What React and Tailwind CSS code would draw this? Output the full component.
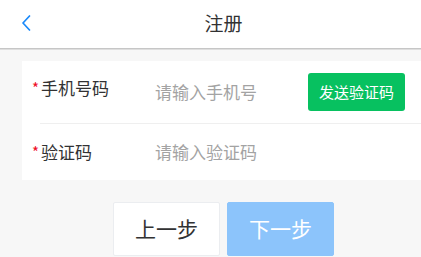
import React, {useState} from 'react'

const font = {fontFamily: '"Noto Sans CJK SC", "Noto Sans", sans-serif'}

const Field = ({label, placeholder, value, onChange, children, top}) => {
  return (
    <div className={`flex items-center pl-[10px] pr-[20px] ${top ? 'py-[12px]' : 'py-[16px]'}`}>
      <div className={`flex w-[123px] shrink-0 leading-[24px] ${top ? 'self-start mt-[3px]' : ''}`}>
        <span className="w-[9px] text-[15px] text-[#ee0a24]">*</span>
        <span className="text-[17px] text-[#323233]">{label}</span>
      </div>
      <input
        className="flex-1 min-w-0 text-[17px] leading-[24px] text-[#323233] bg-transparent outline-none placeholder:text-[#a3a3a3]"
        style={font}
        placeholder={placeholder}
        value={value}
        onChange={onChange}
      />
      {children}
    </div>
  )
}

const App = () => {
  const [phone, setPhone] = useState('')
  const [code, setCode] = useState('')

  return (
    <div className="w-full min-h-screen overflow-hidden bg-[#f7f7f7]" style={font}>
      <div className="w-[447px]">
        <div className="h-[49px] bg-white grid grid-cols-[1fr_auto_1fr] items-center border-b border-[#c6c6c6] shadow-[0_1px_0_#dedede]">
          <div className="pl-[21px] pb-[3px]">
            <svg width="10" height="16" viewBox="0 0 10 16" className="block">
              <polyline points="8.5,1 2,8 8.5,15" fill="none" stroke="#1989fa" strokeWidth="1.7" strokeLinecap="round" strokeLinejoin="round"/>
            </svg>
          </div>
          <div className="text-[19px] text-[#323233] pb-[2px]">注册</div>
          <div></div>
        </div>

        <div className="mt-[12px] mx-[22px] bg-white">
          <Field label="手机号码" placeholder="请输入手机号" value={phone} onChange={(e)=>setPhone(e.target.value)} top>
            <button className="w-[97px] h-[38px] shrink-0 rounded-[3px] bg-[#07c160] text-white text-[15px]">
              发送验证码
            </button>
          </Field>
          <div className="h-px ml-[18px] bg-[#efefef]"></div>
          <Field label="验证码" placeholder="请输入验证码" value={code} onChange={(e)=>setCode(e.target.value)}/>
        </div>

        <div className="mt-[22px] flex justify-center gap-[7px]">
          <button className="w-[107px] h-[54px] bg-white border border-[#ebedf0] rounded-[2px] text-[21px] text-[#323233]">
            上一步
          </button>
          <button className="w-[107px] h-[54px] bg-[#8cc4fb] border border-[#8cc4fb] rounded-[2px] text-[21px] text-white">
            下一步
          </button>
        </div>
      </div>
    </div>
  )
}

export default App
